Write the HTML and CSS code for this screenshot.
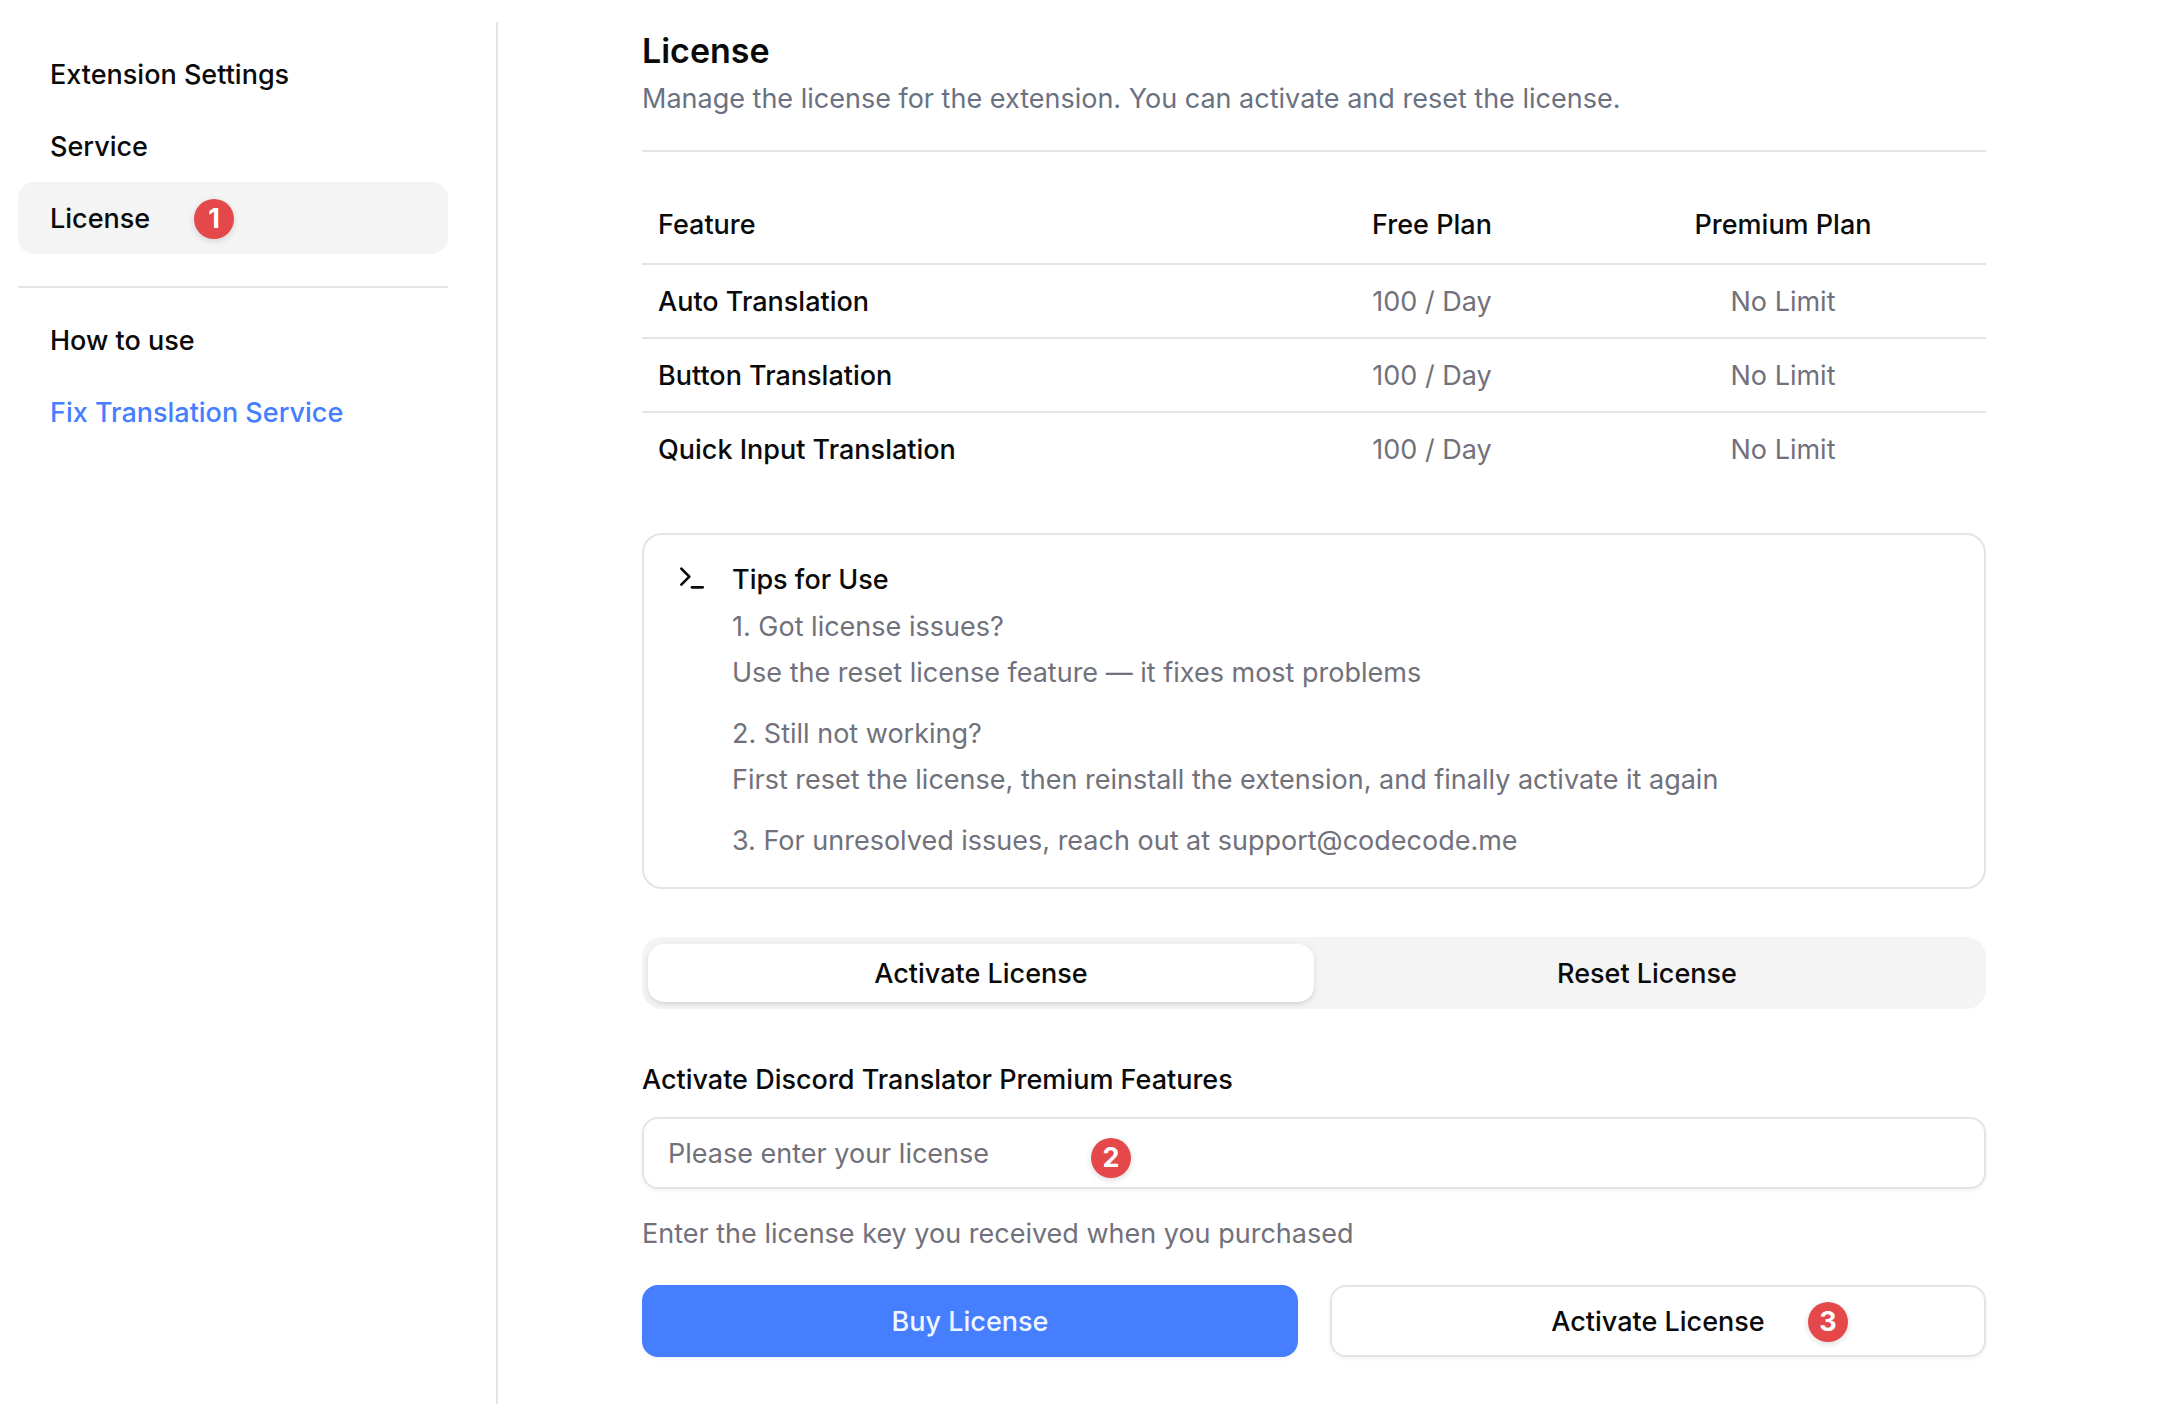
FILE: index.html
```html
<!DOCTYPE html>
<html lang="en">
<head>
<meta charset="utf-8">
<title>License</title>
<link rel="stylesheet" href="styles.css">
</head>
<body>
<div class="shell">
  <aside class="sidebar">
    <nav class="nav" aria-label="Settings">
      <a class="nav-link" href="#settings">Extension Settings</a>
      <a class="nav-link" href="#service">Service</a>
      <a class="nav-link nav-link-active" href="#license" aria-current="page">License<span class="step step-nav">1</span></a>
      <hr class="nav-divider">
      <a class="nav-link" href="#how-to">How to use</a>
      <a class="nav-link nav-link-accent" href="#fix">Fix Translation Service</a>
    </nav>
  </aside>
  <main class="main">
    <div class="content">
      <header class="page-header">
        <h1 class="title">License</h1>
        <p class="subtitle">Manage the license for the extension. You can activate and reset the license.</p>
      </header>
      <table class="plans">
        <thead>
          <tr><th scope="col">Feature</th><th class="col-free" scope="col">Free Plan</th><th class="col-premium" scope="col">Premium Plan</th></tr>
        </thead>
        <tbody>
          <tr><th scope="row">Auto Translation</th><td>100 / Day</td><td>No Limit</td></tr>
          <tr><th scope="row">Button Translation</th><td>100 / Day</td><td>No Limit</td></tr>
          <tr><th scope="row">Quick Input Translation</th><td>100 / Day</td><td>No Limit</td></tr>
        </tbody>
      </table>
      <section class="tips">
        <svg class="tips-icon" viewBox="0 0 24 24" fill="none" stroke="currentColor" stroke-width="2" stroke-linecap="round" stroke-linejoin="round" aria-hidden="true"><polyline points="4 17 10 11 4 5"/><line x1="12" x2="20" y1="19" y2="19"/></svg>
        <div class="tips-body">
          <h2 class="tips-title">Tips for Use</h2>
          <div class="tips-list">
            <p>1. Got license issues?<br>Use the reset license feature — it fixes most problems</p>
            <p>2. Still not working?<br>First reset the license, then reinstall the extension, and finally activate it again</p>
            <p>3. For unresolved issues, reach out at support@codecode.me</p>
          </div>
        </div>
      </section>
      <div class="tabs" role="tablist">
        <button class="tab tab-active" type="button" role="tab" aria-selected="true">Activate License</button>
        <button class="tab" type="button" role="tab" aria-selected="false">Reset License</button>
      </div>
      <form class="form">
        <label class="label" for="license-key">Activate Discord Translator Premium Features</label>
        <div class="field">
          <input class="input" id="license-key" type="text" placeholder="Please enter your license" aria-describedby="license-help">
          <span class="step step-field">2</span>
        </div>
        <p class="help" id="license-help">Enter the license key you received when you purchased</p>
        <div class="actions">
          <button class="button button-primary" type="button">Buy License</button>
          <button class="button button-outline" type="button">Activate License<span class="step step-action">3</span></button>
        </div>
      </form>
    </div>
  </main>
</div>
</body>
</html>
```
FILE: styles.css
```css
*, *::before, *::after { box-sizing: border-box; }

:root {
  --text: #0a0a0b;
  --muted: #71717b;
  --line: #e4e4e4;
  --surface: #f4f4f4;
  --blue: #457eff;
  --red: #e5484a;
}

body {
  margin: 0;
  background: #fff;
  color: var(--text);
  font: 400 27px/40px Inter, "Liberation Sans", sans-serif;
}

h1, h2, p { margin: 0; }
button, input { font: inherit; color: inherit; }

.shell {
  display: flex;
  min-height: 100vh;
  padding: 22px 34px 0 18px;
}

/* Sidebar */
.sidebar {
  flex: 0 0 480px;
  padding: 16px 48px 0 0;
  border-right: 2px solid var(--line);
}

.nav { display: flex; flex-direction: column; }

.nav-link {
  position: relative;
  padding: 17px 32px 15px;
  border-radius: 16px;
  color: inherit;
  font-weight: 500;
  text-decoration: none;
}
.nav-link-active { background: var(--surface); }
.nav-link-accent { color: var(--blue); }

.nav-divider {
  width: 100%;
  margin: 32px 0 16px;
  border: 0;
  border-top: 2px solid var(--line);
}

/* Main column */
.main { flex: 1; min-width: 0; }
.content { max-width: 1344px; margin: 0 auto; }

.page-header {
  padding-bottom: 31px;
  border-bottom: 2px solid var(--line);
}
.title { font-size: 34px; line-height: 57px; font-weight: 600; }
.subtitle { color: #6a7282; }

/* Plan comparison */
.plans {
  width: 100%;
  margin-top: 32px;
  border-collapse: collapse;
  table-layout: fixed;
}
.plans th, .plans td { height: 74px; padding: 2px 16px 0; text-align: center; }
.plans th { font-weight: 500; }
.plans th:first-child { text-align: left; }
.plans thead th { height: 80px; }
.plans td { color: var(--muted); }
.plans tr { border-bottom: 2px solid var(--line); }
.plans tbody tr:last-child { border-bottom: 0; }
.plans tbody tr:last-child > * { height: 72px; }
.col-free { width: 296px; }
.col-premium { width: 406px; }

/* Tips card */
.tips {
  display: flex;
  gap: 24px;
  margin-top: 49px;
  padding: 25px 32px 23px;
  border: 2px solid var(--line);
  border-radius: 20px;
}
.tips-icon { flex: none; width: 32px; height: 32px; margin-top: 2px; }
.tips-title { font-size: 27px; line-height: 40px; font-weight: 500; }
.tips-list {
  display: grid;
  gap: 15px;
  margin-top: 4px;
  color: var(--muted);
  line-height: 46px;
}

/* Tabs */
.tabs {
  display: grid;
  grid-template-columns: 1fr 1fr;
  margin-top: 48px;
  padding: 7px 6px;
  border-radius: 20px;
  background: var(--surface);
}
.tab {
  padding: 10px 16px 8px;
  border: 0;
  border-radius: 16px;
  background: none;
  font-weight: 500;
}
.tab-active {
  background: #fff;
  box-shadow: 0 2px 6px rgba(0, 0, 0, 0.1), 0 2px 4px -2px rgba(0, 0, 0, 0.1);
}

/* License form */
.form { margin-top: 51px; }
.label { display: block; font-weight: 500; }
.field { position: relative; margin-top: 17px; }
.input {
  display: block;
  width: 100%;
  padding: 14px 24px;
  height: 72px;
  border: 2px solid var(--line);
  border-radius: 16px;
  background: #fff;
  box-shadow: 0 2px 4px rgba(0, 0, 0, 0.05);
}
.input::placeholder { color: var(--muted); opacity: 1; }
.help { margin-top: 25px; color: var(--muted); }

.actions {
  display: grid;
  grid-template-columns: 1fr 1fr;
  gap: 32px;
  margin-top: 31px;
  padding-bottom: 46px;
}
.button {
  position: relative;
  padding: 15px 32px 13px;
  border: 2px solid var(--line);
  border-radius: 16px;
  background: #fff;
  font-weight: 500;
  box-shadow: 0 2px 4px rgba(0, 0, 0, 0.05);
}
.button-primary {
  border-color: var(--blue);
  background: var(--blue);
  color: #eff6ff;
}

/* Numbered step markers floating over the controls */
.step {
  position: absolute;
  width: 40px;
  height: 40px;
  border-radius: 50%;
  background: var(--red);
  color: #fff;
  font-size: 27px;
  font-weight: 700;
  line-height: 40px;
  text-align: center;
  box-shadow: 0 2px 6px rgba(0, 0, 0, 0.14);
}
.step-nav { left: 176px; top: 17px; }
.step-field { left: 449px; top: 21px; }
.step-action { left: 476px; top: 15px; }
```
